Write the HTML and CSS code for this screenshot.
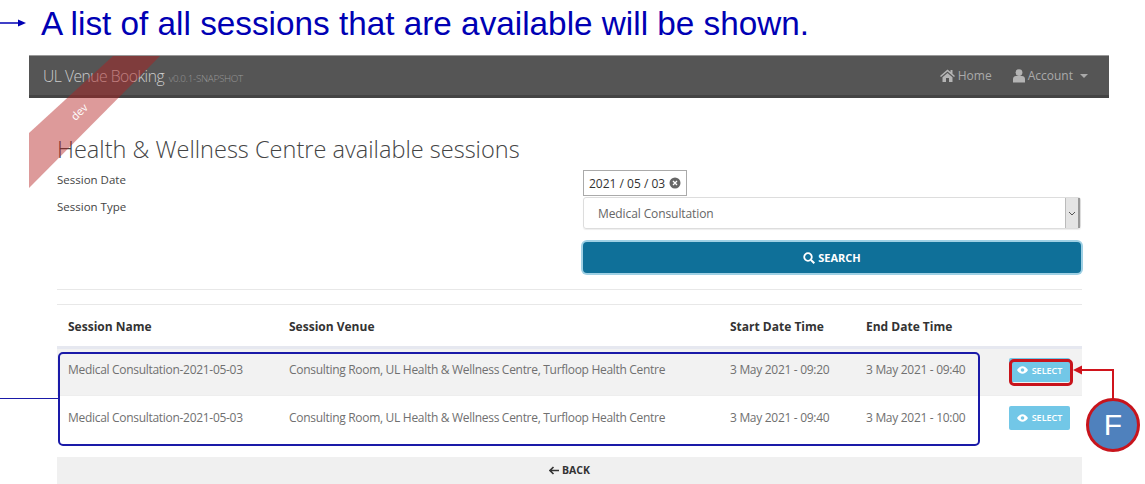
FILE: index.html
```html
<!DOCTYPE html>
<html lang="en">
<head>
<meta charset="utf-8">
<title>Sessions</title>
<link rel="stylesheet" href="styles.css">
</head>
<body>
<div class="caption">A list of all sessions that are available will be shown.</div>
<svg class="ann caption-arrow" width="28" height="10" viewBox="0 0 28 10"><path d="M0 5H20" stroke="#0000b4" stroke-width="1.500"/><path d="M18 1.500l8 3.500-8 3.500z" fill="#0000b4"/></svg>
<div class="app">
  <nav class="navbar">
    <div class="brand">UL Venue Booking <small>v0.0.1-SNAPSHOT</small></div>
    <div class="nav-links">
      <span class="nav-item"><svg width="15" height="13" viewBox="0 0 15 13"><path d="M7.5 0.5L0 7l1 1 6.5-5.6L14 8l1-1-2.5-2.2V1h-2v2L7.5.5z M2.5 8.2L7.5 4l5 4.2V13H9V9H6v4H2.5z" fill="#b4b4b4"/></svg>Home</span>
      <span class="nav-item"><svg width="12" height="14" viewBox="0 0 12 14"><circle cx="6" cy="3.6" r="3.4" fill="#b4b4b4"/><path d="M0 13.5V10c0-2 1.5-3 3-3h6c1.500 0 3 1 3 3v3.500z" fill="#b4b4b4"/></svg>Account<i class="caret"></i></span>
    </div>
  </nav>
  <main class="content">
    <h1>Health &amp; Wellness Centre available sessions</h1>
    <div class="form-grid">
      <div class="label-col">
        <div class="lbl">Session Date</div>
        <div class="lbl">Session Type</div>
      </div>
      <div class="field-col">
        <div class="date-box">2021 / 05 / 03<svg width="12" height="12" viewBox="0 0 12 12"><circle cx="6" cy="6" r="5.500" fill="#666"/><path d="M4 4l4 4M8 4l-4 4" stroke="#fff" stroke-width="1.300"/></svg></div>
        <div class="select-box"><span class="select-text">Medical Consultation</span><span class="select-btn"><svg width="8" height="5" viewBox="0 0 8 5"><path d="M1 1l3 3 3-3" fill="none" stroke="#555" stroke-width="1"/></svg></span></div>
        <div class="search-btn"><svg width="12" height="12" viewBox="0 0 12 12"><circle cx="5" cy="5" r="3.800" fill="none" stroke="#fff" stroke-width="1.800"/><path d="M8 8l3.300 3.300" stroke="#fff" stroke-width="2"/></svg>SEARCH</div>
      </div>
    </div>
    <hr class="rule">
    <table class="sessions">
      <thead>
        <tr><th class="c1">Session Name</th><th class="c2">Session Venue</th><th class="c3">Start Date Time</th><th class="c4">End Date Time</th><th class="c5"></th></tr>
      </thead>
      <tbody>
        <tr class="odd"><td>Medical Consultation-2021-05-03</td><td>Consulting Room, UL Health &amp; Wellness Centre, Turfloop Health Centre</td><td>3 May 2021 - 09:20</td><td>3 May 2021 - 09:40</td><td><span class="select"><svg width="11" height="8" viewBox="0 0 11 8"><path d="M0 4c1.500-2.500 3.500-3.800 5.500-3.800S9.500 1.500 11 4C9.500 6.500 7.500 7.800 5.500 7.800S1.500 6.500 0 4z" fill="#fff"/><circle cx="5.500" cy="4" r="1.800" fill="#72c7e7"/></svg>SELECT</span></td></tr>
        <tr><td>Medical Consultation-2021-05-03</td><td>Consulting Room, UL Health &amp; Wellness Centre, Turfloop Health Centre</td><td>3 May 2021 - 09:40</td><td>3 May 2021 - 10:00</td><td><span class="select"><svg width="11" height="8" viewBox="0 0 11 8"><path d="M0 4c1.500-2.500 3.500-3.800 5.500-3.800S9.500 1.500 11 4C9.500 6.500 7.500 7.800 5.500 7.800S1.500 6.500 0 4z" fill="#fff"/><circle cx="5.500" cy="4" r="1.800" fill="#72c7e7"/></svg>SELECT</span></td></tr>
      </tbody>
    </table>
    <div class="back-btn"><svg width="10" height="9" viewBox="0 0 10 9"><path d="M4.500 1L1 4.500 4.500 8M1.500 4.500H10" fill="none" stroke="#333" stroke-width="1.600"/></svg>BACK</div>
  </main>
</div>
<div class="ann ribbon"><span class="ribbon-text">dev</span></div>
<div class="ann rows-outline"></div>
<div class="ann rows-lead"></div>
<div class="ann select-outline"></div>
<svg class="ann f-arrow" width="42" height="40" viewBox="0 0 42 40"><path d="M6 8H40V40" fill="none" stroke="#d0141c" stroke-width="2"/><path d="M0 8l9-4.500v9z" fill="#d0141c"/></svg>
<div class="ann f-badge">F</div>
</body>
</html>
```
FILE: styles.css
```css
* { box-sizing: border-box; }
html, body { margin: 0; padding: 0; }
body {
  width: 1145px;
  height: 484px;
  overflow: hidden;
  background: #fff;
  position: relative;
  font-family: "Open Sans", "Noto Sans", sans-serif;
  color: #555;
}
.caption {
  height: 55px;
  padding: 5px 0 0 41px;
  font: 33.300px/38px "Liberation Sans", Arial, sans-serif;
  color: #0000b4;
}
.app { margin-left: 29px; width: 1080px; }
.navbar {
  height: 43px;
  background: #555;
  border-top: 1px solid #999;
  border-bottom: 3px solid #444;
  display: flex;
  align-items: center;
  justify-content: space-between;
  padding: 0 21px 0 14px;
}
.brand { font-size: 15.700px; letter-spacing: -0.500px; color: #ccc; font-weight: 300; }
.brand small { font-size: 9.900px; color: #999; letter-spacing: -0.300px; margin-left: 1px; }
.nav-links { display: flex; gap: 21px; font-size: 12px; color: #aaa; }
.nav-item { display: flex; align-items: center; gap: 3px; }
.caret {
  width: 0; height: 0; margin-left: 4px;
  border: 4px solid transparent;
  border-top-color: #aaa;
  border-bottom: 0;
}
.content { padding: 0 27px 0 28px; }
h1 {
  margin: 36px 0 0;
  height: 31px;
  font-size: 23.550px;
  line-height: 31px;
  font-weight: 300;
  color: #444;
}
.form-grid { display: flex; padding-top: 2px; }
.label-col { width: 526px; padding-top: 4px; }
.lbl { height: 27px; font-size: 11.500px; line-height: 18px; color: #444; }
.field-col { flex: 1; display: flex; flex-direction: column; align-items: flex-start; margin-top: 3px; }
.date-box {
  height: 26px;
  width: 104px;
  border: 1px solid #aaa;
  display: flex;
  align-items: center;
  gap: 4px;
  padding-left: 5px;
  font-size: 12px;
  color: #333;
  white-space: nowrap;
}
.select-box {
  margin-top: 1px;
  width: 498px;
  height: 32px;
  border: 1px solid #ddd;
  border-radius: 3px;
  display: flex;
  align-items: center;
  justify-content: space-between;
  box-shadow: 0 1px 1px #eee;
}
.select-text { padding-left: 14px; font-size: 12px; letter-spacing: -0.100px; color: #666; }
.select-btn {
  width: 15px;
  height: 30px;
  background: #e4e4e4;
  border-left: 1px solid #bbb;
  border-right: 2px solid #999;
  display: flex;
  align-items: center;
  justify-content: center;
}
.search-btn {
  margin-top: 13px;
  width: 498px;
  height: 31px;
  background: #0f7099;
  border-radius: 4px;
  box-shadow: 0 0 0 2px #9fd0e4;
  display: flex;
  align-items: center;
  justify-content: center;
  gap: 3px;
  color: #fff;
  font-size: 11px;
  font-weight: 700;
}
.rule { margin: 16px 0 0; border: 0; border-top: 1px solid #e8e8e8; }
.sessions {
  margin-top: 14px;
  width: 1025px;
  border-collapse: collapse;
  table-layout: fixed;
  border-top: 1px solid #e8e8e8;
}
.sessions th {
  height: 43px;
  text-align: left;
  padding: 2px 0 0 11px;
  font-size: 12px;
  font-weight: 700;
  color: #333;
  border-bottom: 3px solid #e6e8f0;
}
.sessions td {
  height: 48px;
  padding: 0 0 5px 11px;
  font-size: 12px;
  letter-spacing: -0.300px;
  color: #707070;
  border-bottom: 1px solid #eee;
  white-space: nowrap;
}
.sessions tbody tr:last-child td { border-bottom: 0; }
.sessions .odd td { background: #f2f2f2; }
.c1 { width: 221px; }
.c2 { width: 441px; }
.c3 { width: 136px; }
.c4 { width: 143px; }
.select {
  display: inline-flex;
  align-items: center;
  justify-content: center;
  gap: 4px;
  width: 61px;
  height: 24px;
  margin-top: 1px;
  background: #72c7e7;
  border-radius: 2px;
  color: #fff;
  font-size: 9px;
  font-weight: 600;
  letter-spacing: 0;
}
.back-btn {
  margin-top: 13px;
  height: 27px;
  width: 1025px;
  background: #f0f0f0;
  display: flex;
  align-items: center;
  justify-content: center;
  gap: 3px;
  font-size: 10.500px;
  font-weight: 700;
  color: #333;
}
.ann { position: absolute; }
.ribbon {
  left: 29px; top: 56px;
  width: 135px; height: 135px;
  background: rgba(180, 30, 30, 0.45);
  clip-path: polygon(84px 0, 131px 0, 0 132px, 0 77px);
}
.ribbon-text {
  position: absolute;
  left: 41px; top: 49px;
  transform: rotate(-45deg);
  color: #fff;
  font-size: 11px;
  line-height: 14px;
}
.caption-arrow { left: 0; top: 18px; }
.rows-outline {
  left: 58px; top: 352px;
  width: 922px; height: 94px;
  border: 2px solid #1a1aa8;
  border-radius: 5px;
}
.rows-lead { left: 0; top: 398px; width: 58px; height: 0; border-top: 1.500px solid #1a1aa8; }
.select-outline {
  left: 1009px; top: 359px;
  width: 64px; height: 27px;
  border: 3px solid #c8141c;
  border-radius: 5px;
}
.f-arrow { left: 1073px; top: 362px; }
.f-badge {
  left: 1086px; top: 398px;
  width: 54px; height: 54px;
  border-radius: 50%;
  border: 3.500px solid #c8141c;
  background: #4f81bd;
  color: #fff;
  font: 30px/47px "Liberation Sans", Arial, sans-serif;
  text-align: center;
}
```
